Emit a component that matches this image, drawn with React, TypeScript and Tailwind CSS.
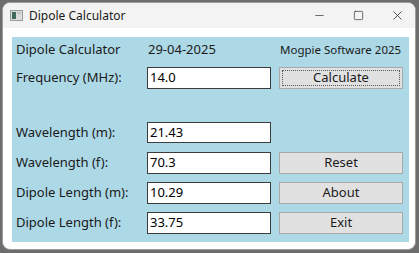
import { Minus, Square, X } from 'lucide-react'

const font = { fontFamily: '"Noto Sans", "Open Sans", sans-serif' }

function Field({ value }: { value: string }) {
  return (
    <div className="h-full border border-[#3c3c3c] bg-white pl-[2px] text-[13px] leading-[19px] text-black">
      {value}
    </div>
  )
}

function Btn({ label, focused }: { label: string; focused?: boolean }) {
  return (
    <div className="relative flex h-full items-center justify-center border border-[#a9a9a9] bg-[#e1e1e1] text-[13px] text-[#1b1b1b]">
      {focused && <div className="absolute inset-[2px] border border-dotted border-[#5a5a5a]" />}
      <span className="relative">{label}</span>
    </div>
  )
}

export default function App() {
  return (
    <div className="h-[253px] w-[419px] bg-[#6d6d6d] p-[2px]" style={font}>
      <div className="flex h-[248px] w-[414px] flex-col overflow-hidden rounded-[8px] border border-[#9c9c9c] bg-white">
        {/* title bar */}
        <div className="flex h-[25px] shrink-0 items-center bg-[#f3f3f3] pl-[7px] text-[12px] text-[#1a1a1a]">
          <svg width="13" height="11" viewBox="0 0 13 11" className="mr-[6px]">
            <rect x="0.5" y="0.5" width="12" height="10" fill="#dcdcdc" stroke="#9a9a9a" />
            <rect x="2" y="2" width="4" height="7" fill="#3f6b5c" />
            <rect x="7" y="2" width="4" height="2" fill="#b8c8c0" />
          </svg>
          <span>Dipole Calculator</span>
          <div className="ml-auto mr-[-2px] flex h-full items-center text-[#222]">
            <div className="flex w-[40px] justify-center pl-[4px]">
              <Minus size={13} strokeWidth={1.2} />
            </div>
            <div className="flex w-[40px] justify-center pl-[2px]">
              <Square size={11} strokeWidth={1.4} />
            </div>
            <div className="flex w-[40px] justify-center">
              <X size={15} strokeWidth={1.2} />
            </div>
          </div>
        </div>

        {/* client area */}
        <div className="flex flex-1 flex-col pl-[9px] pr-[6px] pt-[9px]">
          <div className="flex h-[205px] flex-col bg-[#add8e6] pl-[4px] pr-[4px] pt-[3px] text-[13px] text-[#1a1a1a]">
            <div className="grid h-[20px] grid-cols-[123px_124px_124px] items-center gap-x-[8px] whitespace-nowrap">
              <span>Dipole Calculator</span>
              <span className="pl-[1px]">29-04-2025</span>
              <span className="pl-[1px] text-[11.5px]">Mogpie Software 2025</span>
            </div>
            <div className="mt-[7px] grid h-[22px] grid-cols-[123px_124px_124px] items-center gap-x-[8px]">
              <span>Frequency (MHz):</span>
              <Field value="14.0" />
              <Btn label="Calculate" focused />
            </div>
            <div className="mt-[33px] grid h-[21px] grid-cols-[123px_124px_124px] items-center gap-x-[8px]">
              <span>Wavelength (m):</span>
              <Field value="21.43" />
              <div />
            </div>
            <div className="mt-[9px] grid h-[21px] grid-cols-[123px_124px_124px] items-center gap-x-[8px]">
              <span>Wavelength (f):</span>
              <Field value="70.3" />
              <Btn label="Reset" />
            </div>
            <div className="mt-[9px] grid h-[21px] grid-cols-[123px_124px_124px] items-center gap-x-[8px]">
              <span>Dipole Length (m):</span>
              <Field value="10.29" />
              <Btn label="About" />
            </div>
            <div className="mt-[9px] grid h-[21px] grid-cols-[123px_124px_124px] items-center gap-x-[8px]">
              <span>Dipole Length (f):</span>
              <Field value="33.75" />
              <Btn label="Exit" />
            </div>
          </div>
        </div>
      </div>
    </div>
  )
}
